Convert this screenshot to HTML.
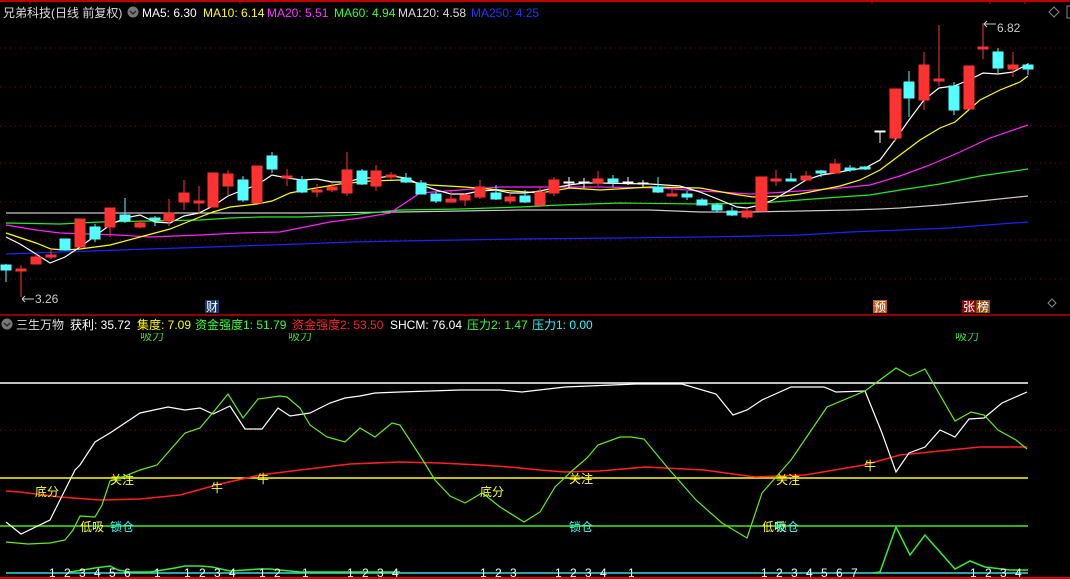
<!DOCTYPE html>
<html><head><meta charset="utf-8"><style>
html,body{margin:0;padding:0;background:#000;width:1070px;height:579px;overflow:hidden}
svg{display:block}
text{font-family:"Liberation Sans","Noto Sans CJK SC",sans-serif;font-size:12px}
</style></head><body>
<svg width="1070" height="579" viewBox="0 0 1070 579" xmlns="http://www.w3.org/2000/svg">
<rect width="1070" height="579" fill="#000"/>
<line x1="0" y1="1" x2="1070" y2="1" stroke="#c00000" stroke-width="2"/>
<g stroke="#c00000"><line x1="30" y1="0" x2="30" y2="4"/><line x1="135" y1="0" x2="135" y2="4"/><line x1="240" y1="0" x2="240" y2="4"/><line x1="872" y1="0" x2="872" y2="4"/><line x1="990" y1="0" x2="990" y2="4"/><line x1="1025" y1="0" x2="1025" y2="4"/></g>
<g stroke="#8a0000" stroke-dasharray="1,4">
<line x1="0" y1="48" x2="1070" y2="48"/><line x1="0" y1="87" x2="1070" y2="87"/><line x1="0" y1="126" x2="1070" y2="126"/><line x1="0" y1="163" x2="1070" y2="163"/><line x1="0" y1="202" x2="1070" y2="202"/><line x1="0" y1="240" x2="1070" y2="240"/><line x1="0" y1="279" x2="1070" y2="279"/>
<line x1="0" y1="430" x2="1070" y2="430"/>
</g>
<line x1="0" y1="315" x2="1070" y2="315" stroke="#c00000" stroke-width="1.5"/>
<line x1="0" y1="578" x2="1070" y2="578" stroke="#e00000" stroke-width="2"/>

<text x="3" y="17" fill="#ddd" font-size="13">兄弟科技(日线 前复权)</text>
<circle cx="133" cy="12" r="5.5" fill="#777"/><path d="M130,11 l3,3 l3,-3" stroke="#222" fill="none" stroke-width="1.3"/>
<text x="142" y="17" fill="#fff">MA5: 6.30</text>
<text x="203" y="17" fill="#ffff00">MA10: 6.14</text>
<text x="267" y="17" fill="#ff33ff">MA20: 5.51</text>
<text x="334" y="17" fill="#33ff33">MA60: 4.94</text>
<text x="398" y="17" fill="#ddd">MA120: 4.58</text>
<text x="471" y="17" fill="#2233ff">MA250: 4.25</text>
<path d="M1054,7 l5,5 l-5,5 l-5,-5z" stroke="#888" fill="none"/>
<path d="M1070,6 h-3 v12 h3" stroke="#888" fill="none"/>
<path d="M1052,299 l4,4 l-4,4 l-4,-4z" stroke="#888" fill="none"/>

<g fill="none" stroke-width="1.2">
<polyline stroke="#2020ff" points="6,254 60,252 120,250 180,248 240,246 300,244 350,242 400,241 460,240 520,239 620,238 700,237 760,236 800,235 850,232 900,230 950,228 1000,224 1028,222"/>
<polyline stroke="#c8c8c8" points="6,213 150,213 250,213 300,213 400,212 460,211 520,210 650,210 700,212 750,212 800,211 850,210 880,209 900,208 940,205 980,201 1028,196"/>
<polyline stroke="#22ee22" points="6,223 60,224 100,222 150,221 200,220 230,218 260,217 300,217 350,215 400,210 460,209 520,207 560,205 620,203 700,204 760,203 800,200 840,197 870,195 900,190 940,184 980,176 1028,169"/>
<polyline stroke="#ff22ff" points="6,225 36,230 60,233 90,234 118,235 150,237 200,235 240,233 280,232 300,228 330,222 360,218 390,213 420,193 460,190 500,187 540,187 600,187 660,188 700,191 720,192 750,194 770,193 800,191 840,188 870,185 900,176 930,165 960,152 990,138 1028,125"/>
<polyline stroke="#ffff00" points="6,233 36,243 51,249 65,250 80,249 110,245 140,237 170,229 200,217 213,212 230,207 257,204 272,201 290,193 310,189 340,184 370,181 400,180 430,185 465,187 500,190 540,193 570,188 600,190 650,187 700,188 733,194 753,197 783,196 800,194 820,190 840,186 860,180 880,170 900,155 920,140 940,128 955,122 980,100 1000,90 1020,82 1028,76"/>
<polyline stroke="#ffffff" points="6,237 20,244 36,254 50,263 65,257 80,247 95,236 110,225 125,218 140,215 155,222 170,223 184,216 199,213 213,206 228,196 243,190 257,185 272,175 287,178 302,180 317,179 332,182 347,182 362,178 376,178 391,176 406,178 421,185 436,190 451,194 465,194 480,191 496,190 510,193 525,193 540,191 554,188 569,185 584,183 600,183 650,184 680,186 700,192 720,200 737,207 747,208 760,205 773,200 790,190 806,180 821,175 835,173 850,170 865,168 880,160 895,140 909,120 924,100 939,88 954,86 969,80 983,73 998,74 1013,72 1028,64"/>
</g>

<g stroke-width="1">
<g stroke="#54ffff" fill="#54ffff">
<line x1="6" y1="264" x2="6" y2="282"/><rect x="1" y="265" width="10" height="5"/>
<line x1="65" y1="239" x2="65" y2="250"/><rect x="60" y="239" width="10" height="11"/>
<line x1="95" y1="224" x2="95" y2="242"/><rect x="90" y="227" width="10" height="12"/>
<line x1="125" y1="198" x2="125" y2="223"/><rect x="120" y="215" width="10" height="6"/>
<line x1="155" y1="216" x2="155" y2="226"/><rect x="150" y="218" width="10" height="2"/>
<line x1="243" y1="176" x2="243" y2="202"/><rect x="238" y="180" width="10" height="20"/>
<line x1="272" y1="152" x2="272" y2="173"/><rect x="267" y="156" width="10" height="13"/>
<line x1="302" y1="176" x2="302" y2="193"/><rect x="297" y="180" width="10" height="12"/>
<line x1="362" y1="169" x2="362" y2="185"/><rect x="357" y="171" width="10" height="13"/>
<line x1="406" y1="173" x2="406" y2="183"/><rect x="401" y="178" width="10" height="4"/>
<line x1="421" y1="180" x2="421" y2="194"/><rect x="416" y="183" width="10" height="11"/>
<line x1="436" y1="192" x2="436" y2="203"/><rect x="431" y="194" width="10" height="7"/>
<line x1="496" y1="185" x2="496" y2="200"/><rect x="491" y="193" width="10" height="6"/>
<line x1="525" y1="190" x2="525" y2="203"/><rect x="520" y="196" width="10" height="6"/>
<line x1="613" y1="175" x2="613" y2="187"/><rect x="608" y="179" width="10" height="3"/>
<line x1="658" y1="177" x2="658" y2="193"/><rect x="653" y="187" width="10" height="5"/>
<line x1="687" y1="191" x2="687" y2="200"/><rect x="682" y="194" width="10" height="3"/>
<line x1="702" y1="198" x2="702" y2="205"/><rect x="697" y="200" width="10" height="5"/>
<line x1="717" y1="203" x2="717" y2="212"/><rect x="712" y="205" width="10" height="5"/>
<line x1="732" y1="207" x2="732" y2="216"/><rect x="727" y="211" width="10" height="4"/>
<line x1="791" y1="173" x2="791" y2="181"/><rect x="786" y="179" width="10" height="2"/>
<line x1="821" y1="170" x2="821" y2="177"/><rect x="816" y="171" width="10" height="2"/>
<line x1="850" y1="165" x2="850" y2="172"/><rect x="845" y="168" width="10" height="2"/>
<line x1="865" y1="166" x2="865" y2="170"/><rect x="860" y="167" width="10" height="2"/>
<line x1="909" y1="71" x2="909" y2="117"/><rect x="904" y="82" width="10" height="16"/>
<line x1="954" y1="82" x2="954" y2="115"/><rect x="949" y="86" width="10" height="24"/>
<line x1="998" y1="48" x2="998" y2="73"/><rect x="993" y="52" width="10" height="16"/>
<line x1="1028" y1="63" x2="1028" y2="75"/><rect x="1023" y="65" width="10" height="4"/>
</g>
<g stroke="#ff3232" fill="#ff3232">
<line x1="21" y1="265" x2="21" y2="297"/><rect x="16" y="269" width="10" height="2"/>
<line x1="36" y1="254" x2="36" y2="264"/><rect x="31" y="257" width="10" height="7"/>
<line x1="51" y1="249" x2="51" y2="259"/><rect x="46" y="255" width="10" height="2"/>
<rect x="75" y="219" width="10" height="28"/>
<line x1="110" y1="208" x2="110" y2="237"/><rect x="105" y="208" width="10" height="19"/>
<line x1="140" y1="220" x2="140" y2="228"/><rect x="135" y="223" width="10" height="4"/>
<line x1="169" y1="199" x2="169" y2="226"/><rect x="164" y="213" width="10" height="8"/>
<line x1="184" y1="180" x2="184" y2="210"/><rect x="179" y="193" width="10" height="9"/>
<line x1="199" y1="186" x2="199" y2="214"/><rect x="194" y="201" width="10" height="2"/>
<rect x="208" y="173" width="10" height="34"/>
<line x1="228" y1="170" x2="228" y2="196"/><rect x="223" y="174" width="10" height="12"/>
<rect x="252" y="166" width="10" height="37"/>
<line x1="287" y1="169" x2="287" y2="186"/><rect x="282" y="176" width="10" height="2"/>
<line x1="317" y1="184" x2="317" y2="197"/><rect x="312" y="190" width="10" height="2"/>
<line x1="332" y1="183" x2="332" y2="192"/><rect x="327" y="187" width="10" height="3"/>
<line x1="347" y1="152" x2="347" y2="196"/><rect x="342" y="170" width="10" height="23"/>
<line x1="376" y1="165" x2="376" y2="191"/><rect x="371" y="171" width="10" height="15"/>
<line x1="391" y1="172" x2="391" y2="180"/><rect x="386" y="175" width="10" height="2"/>
<line x1="451" y1="190" x2="451" y2="203"/><rect x="446" y="199" width="10" height="3"/>
<line x1="465" y1="193" x2="465" y2="206"/><rect x="460" y="195" width="10" height="5"/>
<line x1="480" y1="180" x2="480" y2="199"/><rect x="475" y="187" width="10" height="10"/>
<line x1="510" y1="193" x2="510" y2="204"/><rect x="505" y="197" width="10" height="4"/>
<line x1="540" y1="187" x2="540" y2="207"/><rect x="535" y="192" width="10" height="13"/>
<line x1="554" y1="177" x2="554" y2="196"/><rect x="549" y="180" width="10" height="13"/>
<line x1="598" y1="171" x2="598" y2="186"/><rect x="593" y="179" width="10" height="4"/>
<line x1="672" y1="188" x2="672" y2="196"/><rect x="667" y="194" width="10" height="2"/>
<line x1="747" y1="209" x2="747" y2="219"/><rect x="742" y="211" width="10" height="6"/>
<rect x="756" y="177" width="11" height="34"/>
<line x1="776" y1="170" x2="776" y2="186"/><rect x="771" y="179" width="10" height="2"/>
<line x1="806" y1="171" x2="806" y2="181"/><rect x="801" y="176" width="10" height="4"/>
<line x1="835" y1="159" x2="835" y2="174"/><rect x="830" y="164" width="10" height="9"/>
<line x1="895" y1="89" x2="895" y2="142"/><rect x="890" y="89" width="11" height="49"/>
<line x1="924" y1="52" x2="924" y2="110"/><rect x="919" y="65" width="10" height="35"/>
<line x1="939" y1="25" x2="939" y2="86"/><rect x="934" y="79" width="10" height="2"/>
<rect x="964" y="66" width="10" height="43"/>
<line x1="983" y1="23" x2="983" y2="59"/><rect x="978" y="47" width="10" height="2"/>
<line x1="1013" y1="52" x2="1013" y2="77"/><rect x="1008" y="65" width="10" height="4"/>
</g>
<g stroke="#fff" fill="#fff">
<line x1="569" y1="177" x2="569" y2="188"/><rect x="564" y="182" width="10" height="1"/>
<line x1="584" y1="178" x2="584" y2="188"/><rect x="579" y="182" width="10" height="1"/>
<line x1="628" y1="177" x2="628" y2="185"/><rect x="623" y="182" width="10" height="1"/>
<line x1="643" y1="180" x2="643" y2="187"/><rect x="638" y="183" width="10" height="1"/>
<line x1="880" y1="132" x2="880" y2="143"/><rect x="875" y="131" width="10" height="1"/>
</g>
</g>
<g stroke="#ccc" fill="none"><path d="M984,24 l3,-3 M984,24 l3,3 M984,24 h12" /><path d="M22,299 l3,-3 M22,299 l3,3 M22,299 h12"/></g>
<text x="997" y="32" fill="#ccc">6.82</text>
<text x="35" y="303" fill="#ccc">3.26</text>
<rect x="205" y="300" width="14" height="13" fill="#1a3a6e"/><text x="206" y="311" fill="#fff">财</text>
<rect x="873" y="300" width="14" height="13" fill="#c85a14"/><text x="874" y="311" fill="#fff">预</text>
<rect x="962" y="300" width="14" height="13" fill="#8a0a0a"/><text x="963" y="311" fill="#fff">张</text>
<rect x="976" y="300" width="14" height="13" fill="#8a4a10"/><text x="977" y="311" fill="#fff">榜</text>

<circle cx="7" cy="324" r="5.5" fill="#777"/><path d="M4,323 l3,3 l3,-3" stroke="#222" fill="none" stroke-width="1.3"/>
<text x="16" y="329" fill="#ddd" font-size="13">三生万物</text>
<text x="70" y="329" fill="#fff">获利: 35.72</text>
<text x="137" y="329" fill="#ffff00">集度: 7.09</text>
<text x="195" y="329" fill="#33ff33">资金强度1: 51.79</text>
<text x="292" y="329" fill="#ff2222">资金强度2: 53.50</text>
<text x="390" y="329" fill="#fff">SHCM: 76.04</text>
<text x="467" y="329" fill="#33ff33">压力2: 1.47</text>
<text x="532" y="329" fill="#22ffff">压力1: 0.00</text>
<svg x="0" y="333" width="1070" height="10"><g fill="#33dd33" font-size="12"><text x="140" y="7">吸力</text><text x="288" y="7">吸力</text><text x="955" y="7">吸力</text></g></svg>

<line x1="0" y1="383" x2="1028" y2="383" stroke="#fff" stroke-width="1.5"/>
<line x1="0" y1="478" x2="1028" y2="478" stroke="#ffff00" stroke-width="1.5"/>
<line x1="0" y1="526" x2="1028" y2="526" stroke="#44ee11" stroke-width="1.5"/>
<line x1="6" y1="573" x2="1028" y2="573" stroke="#33dddd" stroke-width="1.5"/>
<g fill="none" stroke-width="1.2">
<polyline stroke="#ff2020" stroke-width="1.6" points="6,491 20,492 60,497 100,500 140,499 180,495 220,484 260,475 300,470 350,464 400,462 440,463 480,465 510,467 540,470 565,472 600,471 645,467 704,470 755,477 805,475 864,465 900,455 980,447 1027,447"/>
<polyline stroke="#ffffff" points="6,522 21,534 50,520 65,490 75,470 80,465 95,442 110,433 140,413 168,407 185,410 200,408 213,414 230,406 245,429 262,429 278,408 290,416 310,413 330,403 345,398 360,396 375,393 400,392 460,390 500,390 522,392 565,387 636,384 682,384 716,394 733,415 747,410 762,400 791,387 824,387 836,392 865,391 882,433 896,472 909,453 925,447 940,430 955,437 969,419 984,418 1002,403 1027,392"/>
<polyline stroke="#66ee11" points="6,542 28,544 50,543 65,540 73,530 80,516 95,517 102,505 110,481 125,476 140,470 157,465 185,433 200,428 215,410 228,394 243,418 258,399 280,396 287,397 300,408 310,425 327,437 345,442 360,428 375,437 392,423 400,425 424,462 435,480 450,496 465,503 482,493 485,495 500,507 524,522 540,512 555,487 573,470 587,458 598,445 620,437 631,437 644,439 667,467 696,500 722,523 747,538 762,493 791,460 827,407 865,391 896,368 910,376 925,369 955,421 971,412 984,415 998,430 1016,440 1027,449"/>
<polyline stroke="#33ee33" stroke-width="1.5" points="70,572 95,568 110,566 118,570 130,572 150,572 175,568 185,566 200,566 212,567 230,571 260,569 270,569 290,571 300,572"/>
<polyline stroke="#33ee33" stroke-width="1.5" points="300,572 400,572"/>
<polyline stroke="#33ee33" stroke-width="1.5" points="873,573 880,572 896,527 910,555 925,535 955,569 970,561 985,567 1010,570 1028,570"/>
</g>
<g fill="#ffff33" font-size="13">
<text x="35" y="496">底分</text><text x="110" y="484">关注</text><text x="80" y="531">低吸</text>
<text x="211" y="492">牛</text><text x="257" y="483">牛</text>
<text x="480" y="496">底分</text><text x="569" y="483">关注</text><text x="776" y="484">关注</text>
<text x="762" y="531">低吸</text><text x="864" y="470">牛</text>
</g>
<g fill="#33ffff" font-size="13">
<text x="110" y="531">锁仓</text><text x="569" y="531">锁仓</text><text x="775" y="531">锁仓</text>
</g>
<g fill="#fff" font-size="12">
<text x="49" y="577">1</text><text x="64" y="577">2</text><text x="79" y="577">3</text><text x="94" y="577">4</text><text x="109" y="577">5</text><text x="124" y="577">6</text>
<text x="154" y="577">1</text>
<text x="184" y="577">1</text><text x="199" y="577">2</text><text x="214" y="577">3</text><text x="229" y="577">4</text>
<text x="259" y="577">1</text><text x="274" y="577">2</text>
<text x="302" y="577">1</text>
<text x="347" y="577">1</text><text x="362" y="577">2</text><text x="377" y="577">3</text><text x="392" y="577">4</text>
<text x="480" y="577">1</text><text x="495" y="577">2</text><text x="510" y="577">3</text>
<text x="555" y="577">1</text><text x="570" y="577">2</text><text x="585" y="577">3</text><text x="600" y="577">4</text>
<text x="628" y="577">1</text>
<text x="761" y="577">1</text><text x="776" y="577">2</text><text x="791" y="577">3</text><text x="806" y="577">4</text><text x="821" y="577">5</text><text x="836" y="577">6</text><text x="851" y="577">7</text>
<text x="970" y="577">1</text><text x="985" y="577">2</text><text x="1000" y="577">3</text><text x="1015" y="577">4</text>
</g>
</svg>
</body></html>
